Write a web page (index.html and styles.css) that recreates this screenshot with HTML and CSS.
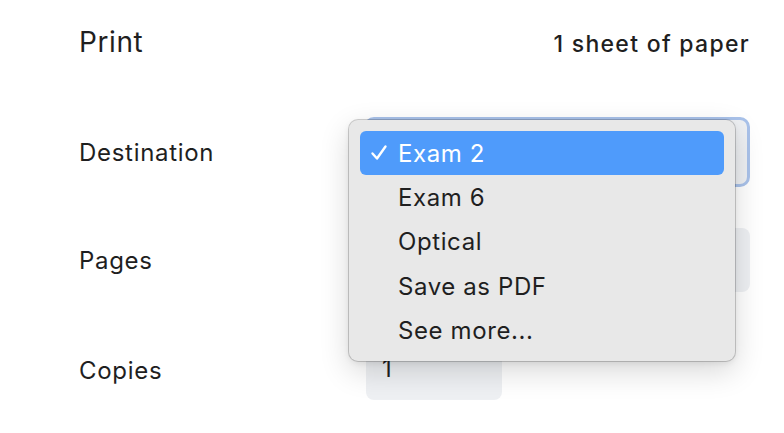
FILE: index.html
```html
<!DOCTYPE html>
<html>
<head>
<meta charset="utf-8">
<link rel="stylesheet" href="styles.css">
</head>
<body>
<div class="page">
  <div class="header">
    <div class="title">Print</div>
    <div class="sheets">1 sheet of paper</div>
  </div>
  <div class="row row-dest">
    <div class="label">Destination</div>
    <div class="select"></div>
  </div>
  <div class="row row-pages">
    <div class="label">Pages</div>
    <div class="field"></div>
  </div>
  <div class="row row-copies">
    <div class="label">Copies</div>
    <div class="field small">1</div>
  </div>
  <div class="menu">
    <div class="item selected"><span class="check"><svg width="20" height="20" viewBox="0 0 20 20"><path d="M3.5 10.5 L8 15.5 L16.5 3.5" fill="none" stroke="#fff" stroke-width="2.4" stroke-linecap="round" stroke-linejoin="round"/></svg></span>Exam 2</div>
    <div class="item"><span class="check"></span>Exam 6</div>
    <div class="item"><span class="check"></span>Optical</div>
    <div class="item"><span class="check"></span>Save as PDF</div>
    <div class="item"><span class="check"></span>See more...</div>
  </div>
</div>
</body>
</html>
```
FILE: styles.css
```css
html, body {
  margin: 0;
  padding: 0;
  background: #ffffff;
}
body {
  font-family: Inter, "Liberation Sans", sans-serif;
  color: #1f1f1f;
  width: 784px;
  height: 433px;
  overflow: hidden;
}
.page {
  position: relative;
  padding: 22px 34px 0 79px;
}
.header {
  display: flex;
  justify-content: space-between;
  align-items: baseline;
  height: 42px;
}
.title {
  font-size: 28px;
  font-weight: 400;
  letter-spacing: 0.6px;
  line-height: 40px;
}
.sheets {
  font-size: 23px;
  font-weight: 500;
  letter-spacing: 1.3px;
}
.row {
  display: flex;
  align-items: center;
}
.label {
  width: 286px;
  font-size: 24px;
  letter-spacing: 0.7px;
}
.row-dest {
  margin-top: 53px;
  height: 70px;
}
.select {
  width: 381px;
  height: 64px;
  border: 3px solid #a9c2ea;
  border-radius: 10px;
  background: #eef0f3;
}
.row-pages {
  margin-top: 41px;
  height: 64px;
}
.field {
  width: 385px;
  height: 64px;
  border-radius: 8px;
  background: #eef0f3;
  font-size: 24px;
  display: flex;
  align-items: center;
  box-sizing: border-box;
  padding-left: 16px;
}
.row-copies {
  margin-top: 53px;
  height: 55px;
}
.row-copies .label {
  padding-bottom: 4px;
}
.field.small {
  width: 136px;
  height: 55px;
  margin-left: 1px;
  padding-bottom: 8px;
}
.menu {
  position: absolute;
  left: 349px;
  top: 120px;
  width: 386px;
  height: 241px;
  box-sizing: border-box;
  padding: 11px 11px;
  background: #e8e8e8;
  border-radius: 9px;
  box-shadow: 0 0 0 1px rgba(0,0,0,0.18), 0 10px 30px rgba(0,0,0,0.16), 0 2px 6px rgba(0,0,0,0.08);
  display: flex;
  flex-direction: column;
}
.item {
  height: 44.3px;
  flex: none;
  display: flex;
  align-items: center;
  font-size: 24px;
  letter-spacing: 0.6px;
  color: #1f1f1f;
  border-radius: 6px;
}
.item.selected {
  background: #4f9bfb;
  color: #ffffff;
}
.check {
  width: 38px;
  padding-left: 9px;
  box-sizing: border-box;
  display: flex;
  align-items: center;
}
```
